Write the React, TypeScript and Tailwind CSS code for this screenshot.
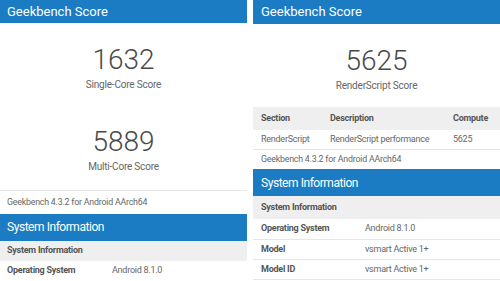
import React from "react";

const BLUE = "bg-[#1b7cc3]";

function Header({ title, pad }: { title: string; pad: string }) {
  return (
    <div className={`${BLUE} h-[24px] flex items-center ${pad} text-[13px] text-white`}>{title}</div>
  );
}

export default function App() {
  return (
    <div
      className="w-[500px] h-[281px] bg-white flex justify-between overflow-hidden text-[#555]"
      style={{ fontFamily: "Roboto, 'Liberation Sans', sans-serif" }}
    >
      {/* Left panel */}
      <div className="w-[247px] flex flex-col">
        <Header title="Geekbench Score" pad="px-[7px]" />
        <div className="flex flex-col items-center pt-[21px]">
          <div className="text-[28px] font-light leading-[32px] text-[#4a4a4a]">1632</div>
          <div className="text-[10px] tracking-[-0.2px] leading-[14px] mt-[2px] text-[#666]">Single-Core Score</div>
          <div className="text-[28px] font-light leading-[32px] mt-[34px] text-[#4a4a4a]">5889</div>
          <div className="text-[10px] tracking-[-0.2px] leading-[14px] mt-[2px] text-[#666]">Multi-Core Score</div>
        </div>
        <div className="mt-[16px] border-t border-[#e6e6e6] h-[26px] flex items-center px-[7px] text-[8.8px] tracking-[-0.2px] text-[#666]">
          Geekbench 4.3.2 for Android AArch64
        </div>
        <div className={`${BLUE} h-[28px] flex items-center px-[7px] text-[12px] tracking-[-0.45px] text-white`}>
          System Information
        </div>
        <div className="bg-[#efefef] h-[22px] flex items-center px-[7px] text-[9px] tracking-[-0.25px] font-bold text-[#555]">
          System Information
        </div>
        <div className="h-[21px] flex items-center px-[7px] text-[9px] tracking-[-0.25px] text-[#555]">
          <div className="w-[105px] font-bold">Operating System</div>
          <div className="text-[#666]">Android 8.1.0</div>
        </div>
      </div>

      {/* Right panel */}
      <div className="w-[247px] flex flex-col">
        <Header title="Geekbench Score" pad="px-[8px]" />
        <div className="flex flex-col items-center pt-[21px]">
          <div className="text-[28px] font-light leading-[32px] text-[#4a4a4a]">5625</div>
          <div className="text-[10px] tracking-[-0.2px] leading-[14px] mt-[2px] text-[#666]">RenderScript Score</div>
        </div>
        <div className="mt-[14px] bg-[#efefef] h-[23px] flex items-center px-[8px] text-[9px] tracking-[-0.25px] font-bold text-[#555]">
          <div className="w-[69px]">Section</div>
          <div className="w-[123px]">Description</div>
          <div>Compute</div>
        </div>
        <div className="h-[20px] flex items-center px-[8px] text-[9px] tracking-[-0.25px] text-[#666] border-b border-[#e6e6e6]">
          <div className="w-[69px]">RenderScript</div>
          <div className="w-[123px]">RenderScript performance</div>
          <div>5625</div>
        </div>
        <div className="h-[19px] flex items-center px-[8px] text-[8.8px] tracking-[-0.2px] text-[#666]">
          Geekbench 4.3.2 for Android AArch64
        </div>
        <div className={`${BLUE} h-[27px] flex items-center px-[8px] text-[12px] tracking-[-0.45px] text-white`}>
          System Information
        </div>
        <div className="bg-[#efefef] h-[23px] flex items-center px-[8px] text-[9px] tracking-[-0.25px] font-bold text-[#555]">
          System Information
        </div>
        <div className="h-[21px] flex items-center px-[8px] text-[9px] tracking-[-0.25px] text-[#555] border-b border-[#e6e6e6]">
          <div className="w-[104px] font-bold">Operating System</div>
          <div className="text-[#666]">Android 8.1.0</div>
        </div>
        <div className="h-[20px] flex items-center px-[8px] text-[9px] tracking-[-0.25px] text-[#555] border-b border-[#e6e6e6]">
          <div className="w-[104px] font-bold">Model</div>
          <div className="text-[#666]">vsmart Active 1+</div>
        </div>
        <div className="h-[20px] flex items-center px-[8px] text-[9px] tracking-[-0.25px] text-[#555] border-b border-[#e6e6e6]">
          <div className="w-[104px] font-bold">Model ID</div>
          <div className="text-[#666]">vsmart Active 1+</div>
        </div>
      </div>
    </div>
  );
}
